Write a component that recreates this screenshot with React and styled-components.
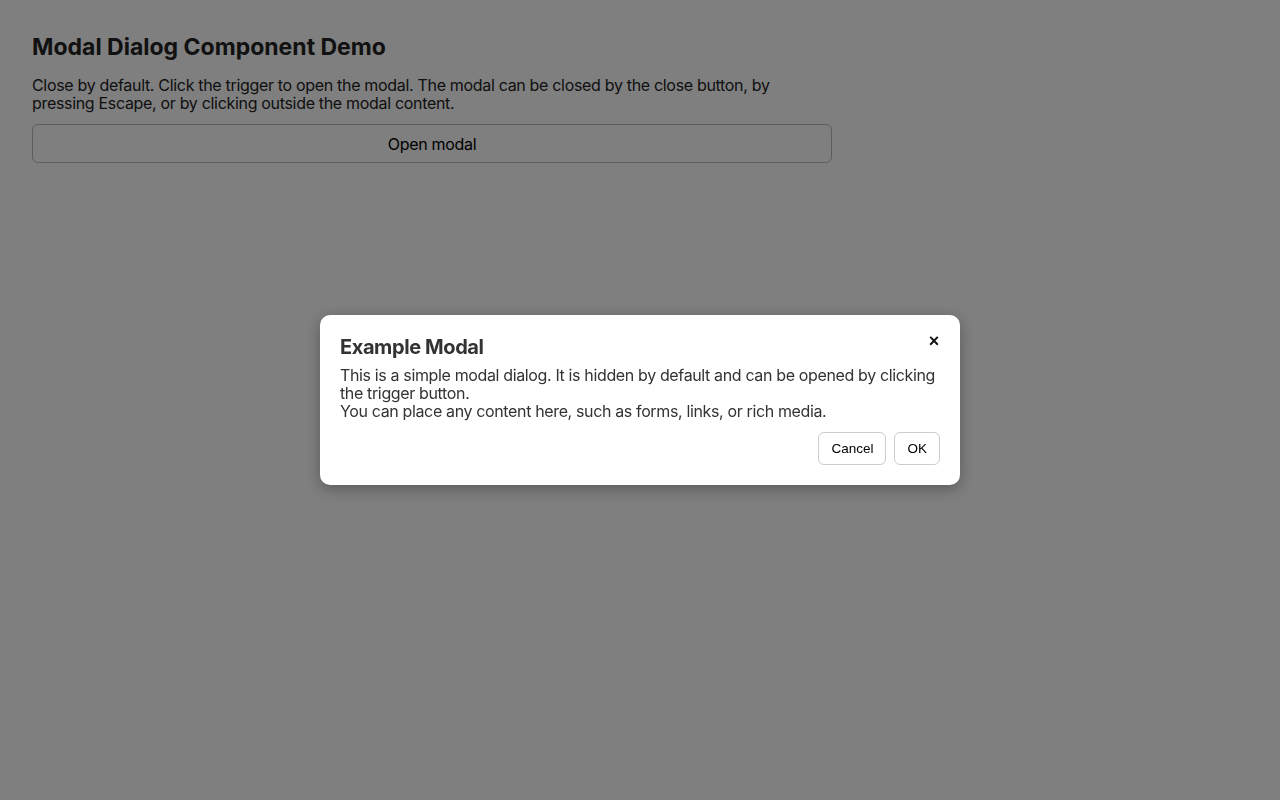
import React from 'react';
import styled, { createGlobalStyle } from 'styled-components';

const Global = createGlobalStyle`
  html, body {
    margin: 0;
    background: #ffffff;
    font-family: Inter, "Noto Sans", "Liberation Sans", sans-serif;
    color: #222;
  }
`;

const Page = styled.main`
  padding: 32px;
  width: 800px;
`;

const Title = styled.h1`
  margin: 0 0 14px;
  font-size: 23px;
  line-height: 30px;
  font-weight: 700;
  letter-spacing: 0;
`;

const Lead = styled.p`
  margin: 0 0 12px;
  font-size: 16px;
  line-height: 18px;
  letter-spacing: -0.32px;
`;

const Trigger = styled.button`
  display: block;
  width: 100%;
  height: 39px;
  border: 1px solid #bbb;
  border-radius: 6px;
  background: #fff;
  font-family: inherit;
  font-size: 16px;
  letter-spacing: -0.3px;
  color: #000;
`;

const Overlay = styled.div`
  position: fixed;
  inset: 0;
  background: rgba(0, 0, 0, 0.5);
  display: flex;
  align-items: center;
  justify-content: center;
`;

const Dialog = styled.div`
  position: relative;
  width: 600px;
  padding: 20px;
  background: #fff;
  border-radius: 10px;
  box-shadow: 0 4px 16px rgba(0, 0, 0, 0.3);
  color: #333;
`;

const DialogTitle = styled.h2`
  margin: 0 0 7px;
  font-size: 20px;
  line-height: 24px;
  font-weight: 700;
  letter-spacing: -0.4px;
`;

const DialogText = styled.p`
  margin: 0;
  font-size: 16px;
  line-height: 18px;
  letter-spacing: -0.36px;
`;

const CloseButton = styled.button`
  position: absolute;
  top: 16px;
  right: 16px;
  width: 20px;
  height: 20px;
  padding: 0;
  border: none;
  background: transparent;
  font-family: "Liberation Sans", Arial, sans-serif;
  font-size: 18px;
  font-weight: 700;
  line-height: 20px;
  color: #111;
`;

const Actions = styled.div`
  display: flex;
  justify-content: flex-end;
  gap: 8px;
  margin-top: 12px;
`;

const ActionButton = styled.button`
  height: 33px;
  padding: 0 12px;
  border: 1px solid #ccc;
  border-radius: 6px;
  background: #fff;
  font-family: "Liberation Sans", Arial, sans-serif;
  font-size: 13.5px;
  color: #000;
`;

export default function App() {
  return (
    <>
      <Global />
      <Page>
        <Title>Modal Dialog Component Demo</Title>
        <Lead>
          Close by default. Click the trigger to open the modal. The modal can be closed by the close
          button, by pressing Escape, or by clicking outside the modal content.
        </Lead>
        <Trigger>Open modal</Trigger>
      </Page>
      <Overlay>
        <Dialog role="dialog" aria-modal="true">
          <CloseButton aria-label="Close">×</CloseButton>
          <DialogTitle>Example Modal</DialogTitle>
          <DialogText>
            This is a simple modal dialog. It is hidden by default and can be opened by clicking the
            trigger button.
          </DialogText>
          <DialogText>You can place any content here, such as forms, links, or rich media.</DialogText>
          <Actions>
            <ActionButton>Cancel</ActionButton>
            <ActionButton>OK</ActionButton>
          </Actions>
        </Dialog>
      </Overlay>
    </>
  );
}
